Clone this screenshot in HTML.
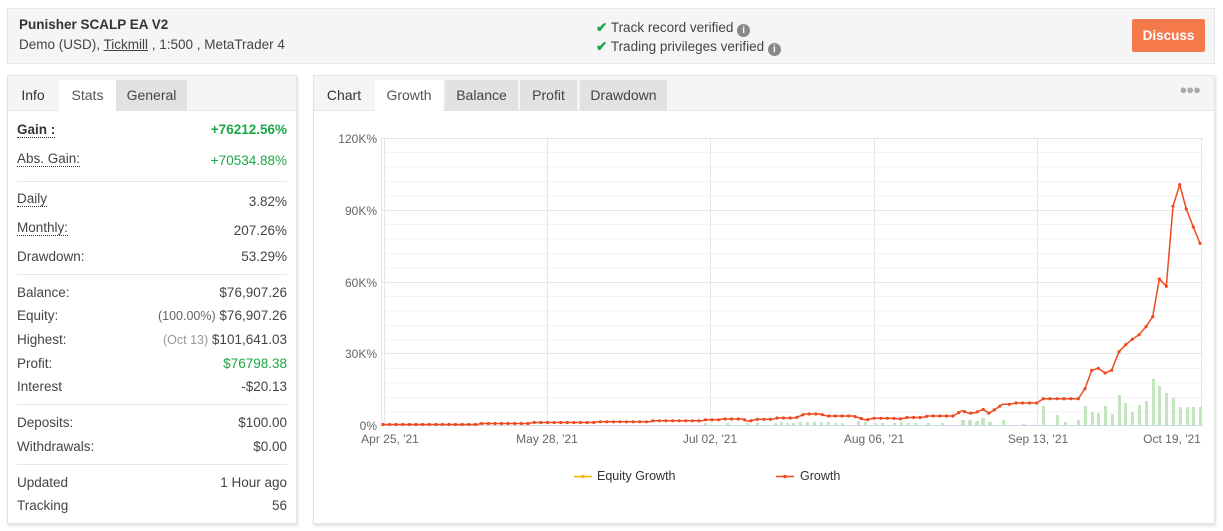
<!DOCTYPE html>
<html><head><meta charset="utf-8"><style>
*{margin:0;padding:0;box-sizing:border-box}
body{width:1223px;height:531px;background:#fff;font-family:"Liberation Sans",Arial,sans-serif;color:#333;position:relative;overflow:hidden;font-size:13px}
.abs{position:absolute}
.hdr{left:7px;top:8px;width:1208px;height:56px;background:#f5f5f5;border:1px solid #e6e6e6}
.panel{background:#fff;border:1px solid #e3e3e3;box-shadow:1px 2px 3px rgba(0,0,0,.12)}
.tabs{position:absolute;left:0;top:0;right:0;height:35px;background:#f5f5f5;border-bottom:1px solid #e6e6e6}
.tab{position:absolute;top:4px;height:31px;line-height:31px;text-align:center;font-size:14px;color:#444}
.tab.g{background:#e2e2e2}
.tab.w{background:#fff;height:32px;color:#555}
.row{position:absolute;left:9px;right:9px;height:18px;line-height:18px;font-size:13.5px;color:#444}
.row .v{position:absolute;right:0;top:0}
.dot{border-bottom:1px dotted #333}
.hr{position:absolute;left:9px;right:9px;height:1px;background:#e8e8e8}
.grn{color:#19a744}
</style></head><body>
<div class="abs hdr">
 <div class="abs" style="left:11px;top:8px;font-weight:bold;font-size:13.5px;color:#333">Punisher SCALP EA V2</div>
 <div class="abs" style="left:11px;top:28px;font-size:13.5px;color:#444">Demo (USD), <span style="text-decoration:underline">Tickmill</span> , 1:500 , MetaTrader 4</div>
 <div class="abs" style="left:588px;top:9px;font-size:13.5px;color:#444;line-height:19px">
  <div><span style="color:#1aa44a;font-weight:bold">✔</span> Track record verified <span style="display:inline-block;width:13px;height:13px;border-radius:50%;background:#888;color:#fff;font-size:10px;line-height:13px;text-align:center;font-weight:bold;vertical-align:-1px">i</span></div>
  <div><span style="color:#1aa44a;font-weight:bold">✔</span> Trading privileges verified <span style="display:inline-block;width:13px;height:13px;border-radius:50%;background:#888;color:#fff;font-size:10px;line-height:13px;text-align:center;font-weight:bold;vertical-align:-1px">i</span></div>
 </div>
 <div class="abs" style="left:1124px;top:10px;width:73px;height:33px;background:#f47a4c;border-radius:2px;color:#fff;font-weight:bold;font-size:13.5px;line-height:33px;text-align:center">Discuss</div>
</div>

<div class="abs panel" style="left:7px;top:75px;width:290px;height:449px">
 <div class="tabs">
  <div class="tab" style="left:0;width:50px;color:#333">Info</div>
  <div class="tab w" style="left:51px;width:57px">Stats</div>
  <div class="tab g" style="left:108px;width:71px">General</div>
 </div>
 <div class="row" style="top:45px"><b class="dot" style="color:#333">Gain :</b><span class="v grn" style="font-weight:bold">+76212.56%</span></div>
 <div class="row" style="top:74px"><span class="dot">Abs. Gain:</span><span class="v grn" style="top:2px">+70534.88%</span></div>
 <div class="hr" style="top:105px"></div>
 <div class="row" style="top:114px"><span class="dot">Daily</span><span class="v" style="top:3px">3.82%</span></div>
 <div class="row" style="top:143px"><span class="dot">Monthly:</span><span class="v" style="top:3px">207.26%</span></div>
 <div class="row" style="top:172px">Drawdown:<span class="v">53.29%</span></div>
 <div class="hr" style="top:198px"></div>
 <div class="row" style="top:208px">Balance:<span class="v">$76,907.26</span></div>
 <div class="row" style="top:231px">Equity:<span class="v"><span style="color:#666;font-size:12.5px">(100.00%)</span> $76,907.26</span></div>
 <div class="row" style="top:255px">Highest:<span class="v"><span style="color:#999;font-size:12.5px">(Oct 13)</span> $101,641.03</span></div>
 <div class="row" style="top:279px">Profit:<span class="v grn">$76798.38</span></div>
 <div class="row" style="top:302px">Interest<span class="v">-$20.13</span></div>
 <div class="hr" style="top:328px"></div>
 <div class="row" style="top:338px">Deposits:<span class="v">$100.00</span></div>
 <div class="row" style="top:362px">Withdrawals:<span class="v">$0.00</span></div>
 <div class="hr" style="top:388px"></div>
 <div class="row" style="top:398px">Updated<span class="v">1 Hour ago</span></div>
 <div class="row" style="top:421px">Tracking<span class="v">56</span></div>
</div>

<div class="abs panel" style="left:313px;top:75px;width:902px;height:449px">
 <div class="tabs">
  <div class="tab" style="left:0;width:60px;color:#333">Chart</div>
  <div class="tab w" style="left:61px;width:68px">Growth</div>
  <div class="tab g" style="left:131px;width:73px">Balance</div>
  <div class="tab g" style="left:206px;width:57px">Profit</div>
  <div class="tab g" style="left:266px;width:87px">Drawdown</div>
  <div class="abs" style="right:14px;top:6px;color:#aaa;font-size:13px;letter-spacing:-1px">●●●</div>
 </div>
</div>

<svg class="abs" style="left:0;top:0" width="1223" height="531" viewBox="0 0 1223 531">
 <g stroke="#f3f3f3" stroke-width="1">
  <path d="M381 152.5H1203M381 167H1203M381 181.5H1203M381 196H1203M381 224.5H1203M381 239H1203M381 253.5H1203M381 268H1203M381 296.5H1203M381 311H1203M381 325.5H1203M381 340H1203M381 368.5H1203M381 383H1203M381 397.5H1203M381 412H1203"/>
 </g>
 <g stroke="#e6e6e6" stroke-width="1">
  <path d="M381 138.5H1203M381 210.5H1203M381 282.5H1203M381 353.5H1203"/>
  <path d="M381.5 138V425M384.5 138V425M547.5 138V425M710.5 138V425M874.5 138V425M1037.5 138V425M1201.5 138V425"/>
 </g>
 <path d="M381 425.5H1203" stroke="#ccd6eb" stroke-width="1"/>
 <g font-size="12" fill="#666" text-anchor="end" font-family="Liberation Sans,Arial,sans-serif">
  <text x="377" y="143">120K%</text><text x="377" y="215">90K%</text><text x="377" y="287">60K%</text><text x="377" y="358">30K%</text><text x="377" y="430">0%</text>
 </g>
 <g font-size="12" fill="#666" text-anchor="middle" font-family="Liberation Sans,Arial,sans-serif">
  <text x="390" y="443">Apr 25, '21</text><text x="547" y="443">May 28, '21</text><text x="710" y="443">Jul 02, '21</text><text x="874" y="443">Aug 06, '21</text><text x="1038" y="443">Sep 13, '21</text><text x="1172" y="443">Oct 19, '21</text>
 </g>
 <g fill="#c3e6be">
  <rect x="704" y="423" width="3" height="2"/><rect x="726" y="423" width="3" height="2"/><rect x="746" y="423" width="3" height="2"/>
  <rect x="756" y="423" width="3" height="2"/><rect x="774" y="423" width="3" height="2"/><rect x="780" y="422" width="3" height="3"/><rect x="786" y="423" width="3" height="2"/><rect x="792" y="423" width="3" height="2"/>
  <rect x="799" y="422" width="3" height="3"/><rect x="806" y="422" width="3" height="3"/><rect x="813" y="422" width="3" height="3"/><rect x="820" y="422" width="3" height="3"/><rect x="827" y="422" width="3" height="3"/><rect x="834" y="423" width="3" height="2"/><rect x="841" y="423" width="3" height="2"/>
  <rect x="857" y="421" width="3" height="4"/><rect x="864" y="422" width="3" height="3"/><rect x="874" y="423" width="3" height="2"/><rect x="881" y="423" width="3" height="2"/><rect x="893" y="423" width="3" height="2"/><rect x="900" y="422" width="3" height="3"/><rect x="907" y="423" width="3" height="2"/><rect x="914" y="423" width="3" height="2"/>
  <rect x="927" y="423" width="3" height="2"/><rect x="941" y="423" width="3" height="2"/><rect x="961" y="420" width="3" height="5"/><rect x="968" y="420" width="3" height="5"/><rect x="975" y="422" width="3" height="3"/><rect x="981" y="418" width="3" height="7"/><rect x="988" y="422" width="3" height="3"/>
  <rect x="961" y="420" width="3" height="5"/><rect x="962" y="420" width="3" height="5"/><rect x="969" y="420" width="3" height="5"/><rect x="976" y="421" width="3" height="4"/><rect x="982" y="418" width="3" height="7"/><rect x="989" y="422" width="3" height="3"/><rect x="1002" y="420" width="3" height="5"/><rect x="1022" y="424" width="3" height="1"/><rect x="1042" y="406" width="3" height="19"/><rect x="1056" y="415" width="3" height="10"/><rect x="1064" y="422" width="3" height="3"/><rect x="1077" y="420" width="3" height="5"/>
  <rect x="1084" y="406" width="3" height="19"/><rect x="1091" y="412" width="3" height="13"/><rect x="1097" y="413" width="3" height="12"/><rect x="1104" y="406" width="3" height="19"/><rect x="1111" y="414" width="3" height="11"/><rect x="1118" y="395" width="3" height="30"/><rect x="1124" y="403" width="3" height="22"/><rect x="1131" y="412" width="3" height="13"/><rect x="1138" y="405" width="3" height="20"/><rect x="1145" y="401" width="3" height="24"/><rect x="1152" y="379" width="3" height="46"/><rect x="1158" y="386" width="3" height="39"/><rect x="1165" y="393" width="3" height="32"/><rect x="1172" y="398" width="3" height="27"/><rect x="1179" y="407" width="3" height="18"/><rect x="1186" y="407" width="3" height="18"/><rect x="1192" y="407" width="3" height="18"/><rect x="1199" y="407" width="3" height="18"/>
 </g>
 <g fill="none" stroke="#ee4a1f">
  <polyline id="gl" stroke-width="1.5" points="383,424.5 478,424.5 480,423.5 530,423.5 532,422.5 595,422.5 597,421.8 650,421.8 652,420.8 702,420.8 705,419.8 720,419.8 722,419 743,419 747,421 750,421 757,419.3 772,419.3 777,418 795,418 805,414 820,414 827,416 853,416 866,420 873,418.3 893,418.3 900,419 907,417.5 922,417.5 928,416 953,416 962,410.7 969,413.3 976,412.5 983,409.3 989,413.3 996,408.7 1002.7,404.3 1009.3,404.3 1016,403 1036.7,403 1043.3,398.7 1078.3,398.7 1085,388.7 1091.7,370.3 1098.3,368.3 1105,373 1111.7,370.3 1119,351.7 1125.7,344.7 1132.3,339.3 1139,334.7 1146,326.7 1152.7,316.7 1159.3,279 1166.3,286.3 1173,206.3 1179.7,184.7 1186.3,209 1193.3,227 1200,243.3"/>
  <polyline stroke-width="3.2" stroke-linecap="round" stroke-dasharray="0 6.6" points="383,424.5 478,424.5 480,423.5 530,423.5 532,422.5 595,422.5 597,421.8 650,421.8 652,420.8 702,420.8 705,419.8 720,419.8 722,419 743,419 747,421 750,421 757,419.3 772,419.3 777,418 795,418 805,414 820,414 827,416 853,416 866,420 873,418.3 893,418.3 900,419 907,417.5 922,417.5 928,416 953,416 962,410.7 969,413.3 976,412.5 983,409.3 989,413.3 996,408.7 1002.7,404.3"/>
 </g>
 <g fill="#ee4a1f">
  <circle cx="1009.3" cy="404.3" r="1.6"/><circle cx="1016" cy="403" r="1.6"/><circle cx="1022.5" cy="403" r="1.6"/><circle cx="1029.5" cy="403" r="1.6"/><circle cx="1036.7" cy="403" r="1.6"/><circle cx="1043.3" cy="398.7" r="1.6"/><circle cx="1050" cy="398.7" r="1.6"/><circle cx="1057" cy="398.7" r="1.6"/><circle cx="1064" cy="398.7" r="1.6"/><circle cx="1071" cy="398.7" r="1.6"/><circle cx="1078.3" cy="398.7" r="1.6"/><circle cx="1085" cy="388.7" r="1.6"/><circle cx="1091.7" cy="370.3" r="1.6"/><circle cx="1098.3" cy="368.3" r="1.6"/><circle cx="1105" cy="373" r="1.6"/><circle cx="1111.7" cy="370.3" r="1.6"/><circle cx="1119" cy="351.7" r="1.6"/><circle cx="1125.7" cy="344.7" r="1.6"/><circle cx="1132.3" cy="339.3" r="1.6"/><circle cx="1139" cy="334.7" r="1.6"/><circle cx="1146" cy="326.7" r="1.6"/><circle cx="1152.7" cy="316.7" r="1.6"/><circle cx="1159.3" cy="279" r="1.6"/><circle cx="1166.3" cy="286.3" r="1.6"/><circle cx="1173" cy="206.3" r="1.6"/><circle cx="1179.7" cy="184.7" r="1.6"/><circle cx="1186.3" cy="209" r="1.6"/><circle cx="1193.3" cy="227" r="1.6"/><circle cx="1200" cy="243.3" r="1.6"/>
 </g>
 <g font-size="12.5" fill="#333" font-family="Liberation Sans,Arial,sans-serif">
  <path d="M574 476.5H592" stroke="#f5b800" stroke-width="1.5"/><circle cx="583" cy="476.5" r="1.8" fill="#f5b800"/>
  <text x="597" y="480">Equity Growth</text>
  <path d="M776 476.5H794" stroke="#ee4a1f" stroke-width="1.5"/><circle cx="785" cy="476.5" r="1.8" fill="#ee4a1f"/>
  <text x="800" y="480">Growth</text>
 </g>
</svg>
</body></html>
